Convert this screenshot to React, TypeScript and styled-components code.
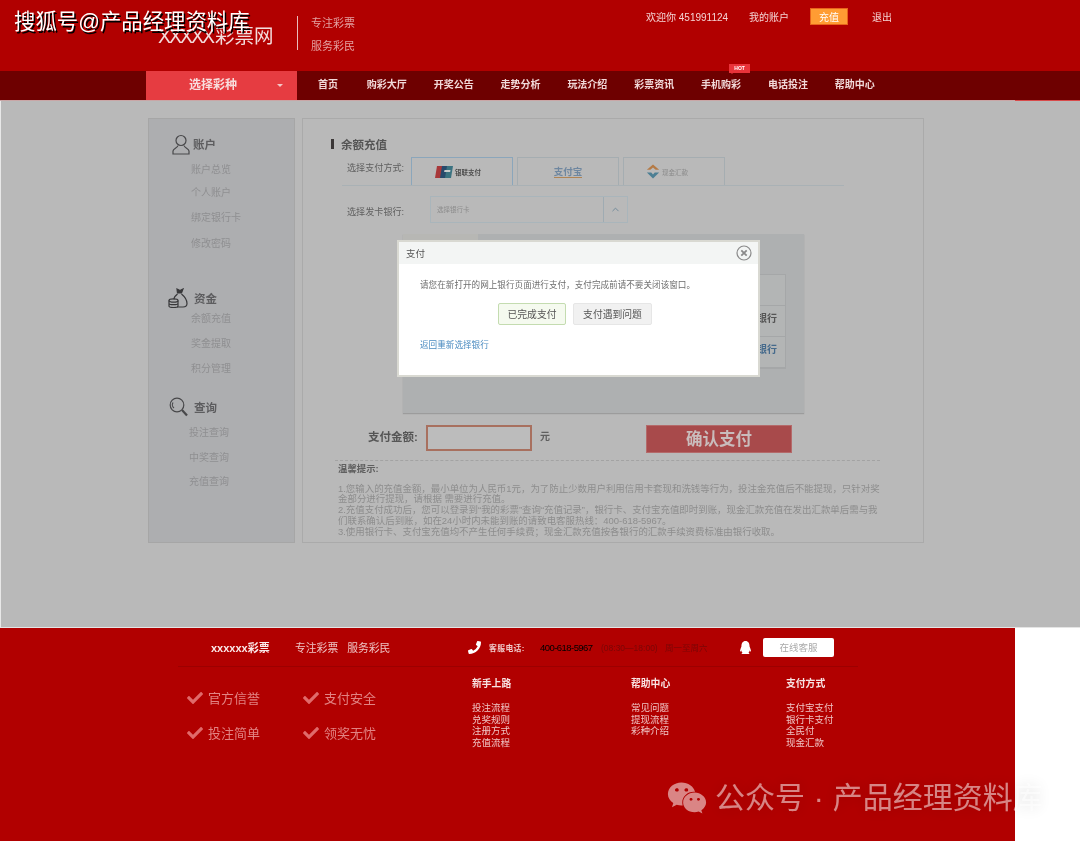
import styled, { createGlobalStyle } from 'styled-components';
import { FaCheck, FaPhoneAlt, FaQq, FaWeixin } from 'react-icons/fa';
import { FiChevronUp } from 'react-icons/fi';

const FONT = '"Liberation Sans", "Noto Sans CJK SC", sans-serif';

const GlobalStyle = createGlobalStyle`
  html, body {
    margin: 0;
    padding: 0;
    background: #fff;
  }
  * {
    box-sizing: border-box;
  }
`;

const Page = styled.div`
  position: relative;
  width: 1080px;
  height: 841px;
  overflow: hidden;
  font-family: ${FONT};
  background: #fff;
  filter: blur(0.35px);
`;

const Watermark = styled.div`
  position: absolute;
  left: 14px;
  top: 9px;
  font-size: 21.4px;
  line-height: 26px;
  color: #fff;
  text-shadow: 1.5px 1.5px 0 #000;
  z-index: 5;
`;

const BottomMark = styled.div`
  position: absolute;
  left: 667px;
  top: 778px;
  display: flex;
  align-items: center;
  gap: 8px;
  font-size: 30px;
  line-height: 38px;
  word-spacing: 0.5px;
  color: rgba(255, 255, 255, 0.52);
  text-shadow: 0 0 14px rgba(0, 0, 0, 0.12);
  white-space: nowrap;
  z-index: 5;
`;

const Header = styled.header`
  display: flex;
  height: 71px;
  padding-left: 158px;
  background: #b10000;
`;

const Logo = styled.div`
  margin-top: 23px;
  width: 139px;
  font-size: 19.5px;
  line-height: 26px;
  color: #f3dcdc;
  white-space: nowrap;
`;

const LogoMask = styled.span`
  letter-spacing: -2px;
  margin-right: 2px;
`;

const Slogan = styled.div`
  display: flex;
  flex-direction: column;
  gap: 9px;
  height: 34px;
  margin-top: 16px;
  padding-left: 13px;
  border-left: 1.5px solid #eabcbc;
  font-size: 11px;
  line-height: 14px;
  color: #e3a0a0;
  white-space: nowrap;
`;

const UserBar = styled.div`
  display: flex;
  align-items: center;
  height: 17px;
  margin: 8px 0 0 291px;
  font-size: 10px;
  color: #f4d3d3;
  white-space: nowrap;
`;

const UserLink = styled.span<{ $gap: number }>`
  margin-right: ${(p) => p.$gap}px;
`;

const RechargeButton = styled.span`
  display: flex;
  align-items: center;
  justify-content: center;
  width: 38px;
  height: 17px;
  margin-right: 24px;
  background: #ff9c33;
  border: 1px solid #e8641c;
  color: #fff;
`;

const Nav = styled.nav`
  position: relative;
  display: flex;
  height: 30px;
  padding-left: 146px;
  background: #6e0000;
  border-bottom: 1px solid #c9a6a6;

  &::after {
    content: '';
    position: absolute;
    right: 0;
    bottom: -1px;
    width: 65px;
    height: 1px;
    background: #d84a4a;
  }
`;

const LotteryPicker = styled.div`
  position: relative;
  width: 151px;
  padding-left: 43px;
  margin-right: 21px;
  background: #e63c41;
  color: #f8dede;
  font-size: 12px;
  font-weight: bold;
  line-height: 28px;

  &::after {
    content: '';
    position: absolute;
    left: 131px;
    top: 13px;
    border: 3px solid transparent;
    border-top-color: #f4c6c6;
  }
`;

const NavItems = styled.div`
  display: flex;
  gap: 26.85px;
`;

const NavItem = styled.span`
  position: relative;
  font-size: 10px;
  font-weight: bold;
  line-height: 28px;
  color: #f1d9d9;
  white-space: nowrap;

  &:first-child {
    margin-right: 2px;
  }
`;

const HotBadge = styled.span`
  position: absolute;
  left: 28px;
  top: -7px;
  width: 21px;
  height: 9px;
  background: #e9333a;
  color: #fff;
  font-size: 5px;
  font-weight: bold;
  line-height: 9px;
  text-align: center;

  &::after {
    content: '';
    position: absolute;
    left: 2px;
    top: 9px;
    border: 1.5px solid transparent;
    border-top-color: #e9333a;
  }
`;

const Main = styled.main`
  position: relative;
  display: flex;
  gap: 7px;
  height: 527px;
  padding: 17px 0 0 147px;
  background: #b9b9b9;
  border-left: 1px solid #e8e8e8;
  border-bottom: 1px solid #e4e4e4;
`;

const Sidebar = styled.aside`
  width: 147px;
  height: 425px;
  padding-top: 13px;
  background: #adaeb0;
  border: 1px solid #a6a6a6;
`;

const SideSection = styled.section<{ $mb: number; $indent: number }>`
  padding-left: ${(p) => p.$indent}px;
  margin-bottom: ${(p) => p.$mb}px;
`;

const SideHead = styled.div<{ $gap: number; $left: number; $mb: number }>`
  display: flex;
  align-items: center;
  gap: ${(p) => p.$gap}px;
  height: 24px;
  margin-left: ${(p) => p.$left}px;
  margin-bottom: ${(p) => p.$mb}px;
  color: #5d5d5f;
  font-size: 11.5px;
  font-weight: bold;

  svg {
    flex: none;
  }
`;

const SideItem = styled.div<{ $h: number }>`
  height: ${(p) => p.$h}px;
  font-size: 10px;
  line-height: 18px;
  color: #8f8f91;
  white-space: nowrap;
`;

const Panel = styled.div`
  width: 622px;
  height: 425px;
  padding: 17px 0 0 28px;
  border: 1px solid #aaaaaa;
`;

const PanelTitle = styled.h2`
  display: flex;
  align-items: center;
  gap: 7px;
  height: 16px;
  margin: 0;
  font-size: 11.5px;
  font-weight: bold;
  color: #555;

  &::before {
    content: '';
    width: 3px;
    height: 10px;
    background: #3c3838;
  }
`;

const TabRow = styled.div`
  display: flex;
  align-items: flex-end;
  width: 502px;
  height: 29px;
  margin: 5px 0 0 11px;
  border-bottom: 1px solid #a9b1b5;
`;

const RowLabel = styled.span<{ $w: number; $top: number }>`
  align-self: flex-start;
  width: ${(p) => p.$w}px;
  padding: ${(p) => p.$top}px 0 0 5px;
  font-size: 9.1px;
  line-height: 12px;
  color: #5f5f5f;
  white-space: nowrap;
`;

const PayTab = styled.div<{ $active?: boolean; $pr: number }>`
  display: flex;
  align-items: center;
  justify-content: center;
  gap: 2px;
  width: 102px;
  height: 28px;
  margin-right: 4px;
  padding-right: ${(p) => p.$pr}px;
  border: 1px solid ${(p) => (p.$active ? '#8ba6bb' : '#a5adb1')};
  border-bottom: none;
  font-size: 6.5px;
  font-weight: ${(p) => (p.$active ? 'bold' : 'normal')};
  color: ${(p) => (p.$active ? '#4d4d4d' : '#8b8b8b')};
`;

const AlipayText = styled.span`
  font-size: 9.5px;
  font-weight: bold;
  color: #6f87a0;
  border-bottom: 1px solid #b08455;
  line-height: 11px;
`;

const BankRow = styled.div`
  display: flex;
  height: 27px;
  margin: 10px 0 0 11px;
`;

const BankSelect = styled.div`
  display: flex;
  width: 198px;
  height: 27px;
  border: 1px solid #a9b5bb;
`;

const BankPlaceholder = styled.span`
  flex: 1;
  padding-left: 6px;
  font-size: 6.5px;
  line-height: 25px;
  color: #8c8c8c;
  border-right: 1px solid #9fabb2;
`;

const BankArrow = styled.span`
  display: flex;
  align-items: center;
  justify-content: center;
  width: 23px;
  color: #6d8898;
`;

const BankBox = styled.div`
  position: relative;
  width: 401px;
  height: 179px;
  margin: 11px 0 0 72px;
  background: #aeb0b1;
  box-shadow: 0 1px 1px #9c9c9c;

  &::before {
    content: '';
    position: absolute;
    left: 0;
    top: 0;
    width: 75px;
    height: 7px;
    background: #b7b7b4;
  }
`;

const BankGrid = styled.div`
  position: absolute;
  top: 40px;
  right: 18px;
  width: 120px;
  border: 1px solid #a5a7a8;
  background: #b3b5b5;
`;

const BankCell = styled.div<{ $color: string }>`
  height: 31px;
  padding-right: 8px;
  border-bottom: 1px solid #a5a7a8;
  font-size: 10px;
  font-weight: bold;
  line-height: 25px;
  text-align: right;
  color: ${(p) => p.$color};
`;

const AmountRow = styled.div`
  display: flex;
  align-items: flex-start;
  height: 28px;
  margin: 12px 0 0 37px;
`;

const AmountLabel = styled.span`
  width: 58px;
  font-size: 11.5px;
  font-weight: bold;
  line-height: 24px;
  color: #565656;
`;

const AmountInput = styled.div`
  width: 106px;
  height: 26px;
  border: 2px solid #a8705f;
  background: #bcbcbc;
`;

const Unit = styled.span`
  width: 114px;
  padding-left: 8px;
  font-size: 10px;
  font-weight: bold;
  line-height: 24px;
  color: #5f5f5f;
`;

const ConfirmButton = styled.div`
  width: 146px;
  height: 28px;
  background: #a84a4b;
  border: 1px solid #b46a6a;
  color: #c9bcbc;
  font-size: 16.5px;
  font-weight: bold;
  line-height: 26px;
  text-align: center;
`;

const Tips = styled.div`
  width: 545px;
  margin: 7px 0 0 4px;
  border-top: 1px dashed #a3a3a3;
`;

const TipsTitle = styled.div`
  padding: 1px 0 0 3px;
  font-size: 9.4px;
  font-weight: bold;
  line-height: 13px;
  color: #606060;
`;

const TipsBody = styled.div`
  margin: 8.5px -3px 0 3px;
  font-size: 9.45px;
  line-height: 10.8px;
  color: #8d8d8d;
`;

const Modal = styled.div`
  position: absolute;
  left: 396px;
  top: 139px;
  width: 363px;
  height: 137px;
  background: #fff;
  border: 2px solid #d9d9d2;
`;

const ModalHead = styled.div`
  display: flex;
  align-items: center;
  justify-content: space-between;
  height: 22px;
  padding: 0 6px 0 7px;
  background: #f3f5f4;
  color: #555;
  font-size: 9.5px;
`;

const CloseIcon = styled.svg`
  width: 16px;
  height: 16px;
  margin-top: -1px;
`;

const ModalMessage = styled.div`
  padding: 15px 0 0 21px;
  font-size: 8.6px;
  line-height: 12px;
  color: #6d6d6d;
`;

const ModalButtons = styled.div`
  display: flex;
  gap: 7px;
  margin: 12px 0 0 99px;
`;

const ModalButton = styled.div<{ $done?: boolean }>`
  display: flex;
  align-items: center;
  justify-content: center;
  height: 22px;
  width: ${(p) => (p.$done ? 68 : 79)}px;
  border: 1px solid ${(p) => (p.$done ? '#c4dcb0' : '#e6e6e6')};
  border-radius: 2px;
  background: ${(p) => (p.$done ? '#f5faef' : '#f1f1f1')};
  color: #555;
  font-size: 9.8px;
`;

const BackLink = styled.div`
  padding: 14px 0 0 21px;
  font-size: 8.6px;
  line-height: 12px;
  color: #4a8bc0;
`;

const Footer = styled.footer`
  width: 1015px;
  height: 214px;
  background: #b10000;
`;

const FooterTop = styled.div`
  display: flex;
  align-items: center;
  width: 680px;
  height: 39px;
  margin-left: 178px;
  padding: 0 0 0 33px;
  border-bottom: 1px solid #9c0000;
  white-space: nowrap;
`;

const FooterBrand = styled.span`
  width: 84px;
  font-size: 11px;
  font-weight: bold;
  color: #fbeaea;
`;

const FooterSlogan = styled.span`
  width: 173px;
  font-size: 10.8px;
  color: #eec3c3;
  word-spacing: 6px;
`;

const PhoneLabel = styled.span`
  width: 51px;
  margin-left: 8px;
  font-size: 7.8px;
  font-weight: bold;
  letter-spacing: 0.4px;
  color: #f0caca;
`;

const PhoneNumber = styled.span`
  width: 61px;
  font-size: 9.5px;
  letter-spacing: -0.55px;
  color: #000;
`;

const PhoneHours = styled.span`
  width: 138px;
  font-size: 8.5px;
  word-spacing: 5px;
  color: #7a0606;
`;

const ServiceButton = styled.span`
  width: 71px;
  height: 19px;
  margin-left: 11px;
  border-radius: 2px;
  background: #fff;
  color: #aaa;
  font-size: 9.5px;
  line-height: 19px;
  text-align: center;
`;

const FooterBody = styled.div`
  display: flex;
  margin-left: 187px;
`;

const Promises = styled.div`
  display: grid;
  grid-template-columns: 116px 116px;
  grid-auto-rows: 35px;
  width: 285px;
  padding-top: 13px;
`;

const Promise = styled.div`
  display: flex;
  align-items: center;
  gap: 5px;
  font-size: 13px;
  color: #e28383;
  white-space: nowrap;
`;

const LinkColumn = styled.div<{ $w: number }>`
  width: ${(p) => p.$w}px;
  padding-top: 10px;
`;

const LinkTitle = styled.div`
  margin-bottom: 12px;
  font-size: 9.8px;
  font-weight: bold;
  line-height: 13px;
  color: #f8e3e3;
`;

const LinkItem = styled.div`
  font-size: 9.5px;
  line-height: 11.6px;
  color: #efc4c4;
`;

const menu = [
  '首页',
  '购彩大厅',
  '开奖公告',
  '走势分析',
  '玩法介绍',
  '彩票资讯',
  '手机购彩',
  '电话投注',
  '帮助中心',
];

const columns = [
  { title: '新手上路', w: 159, items: ['投注流程', '兑奖规则', '注册方式', '充值流程'] },
  { title: '帮助中心', w: 155, items: ['常见问题', '提现流程', '彩种介绍'] },
  { title: '支付方式', w: 80, items: ['支付宝支付', '银行卡支付', '全民付', '现金汇款'] },
];

// full-width punctuation, written as escapes so it stays full-width
const tips = [
  '1.您输入的充值金额\uFF0C最小单位为人民币1元\uFF0C为了防止少数用户利用信用卡套现和洗钱等行为\uFF0C投注金充值后不能提现\uFF0C只针对奖金部分进行提现\uFF0C请根据 需要进行充值。',
  '2.充值支付成功后\uFF0C您可以登录到“我的彩票”查询“充值记录”\uFF0C银行卡、支付宝充值即时到账\uFF0C现金汇款充值在发出汇款单后需与我们联系确认后到账\uFF0C如在24小时内未能到账的请致电客服热线\uFF1A400-618-5967。',
  '3.使用银行卡、支付宝充值均不产生任何手续费\uFF1B现金汇款充值按各银行的汇款手续资费标准由银行收取。',
];

const modalMessage = '请您在新打开的网上银行页面进行支付\uFF0C支付完成前请不要关闭该窗口。';

function UserIcon() {
  return (
    <svg width="18" height="21" viewBox="0 0 18 21" fill="none" stroke="#48484a" strokeWidth="1.2">
      <circle cx="9" cy="6.5" r="5" />
      <path d="M6 11.5C5.5 14 1 14.5 1 17v3h16v-3c0-2.5-4.5-3-5-5.5" />
    </svg>
  );
}

function BagIcon() {
  return (
    <svg width="20" height="20" viewBox="0 0 20 20" fill="none" stroke="#38383a" strokeWidth="1.2">
      <path d="M9 1l3 1.5L15 1l-1.5 4h-4z" fill="#38383a" />
      <path d="M9.5 6C7 8 6 10 6 11h-.5M13.5 6c3 2.5 5.5 6 5.5 9.5 0 2.5-2 3.5-4 3.5H9" />
      <ellipse cx="5.5" cy="12.5" rx="4.5" ry="1.7" />
      <path d="M1 12.5V18c0 1 2 1.5 4.5 1.5S10 19 10 18v-5.5M1 15.2c0 1 2 1.5 4.5 1.5s4.5-.5 4.5-1.5" />
    </svg>
  );
}

function SearchIcon() {
  return (
    <svg width="20" height="20" viewBox="0 0 20 20" fill="none" stroke="#48484a" strokeWidth="1.2">
      <circle cx="8" cy="8" r="6.8" />
      <path d="M4 5.5C2.8 7.5 3.5 10 5 11" />
      <path d="M13 13l5 5.5" strokeWidth="2.2" />
    </svg>
  );
}

function UnionPayIcon() {
  return (
    <svg width="18" height="12" viewBox="0 0 18 12">
      <path d="M2 0h7L7 12H0z" fill="#a8383a" />
      <path d="M7 0h6l-2 12H5z" fill="#27496b" />
      <path d="M12 0h6l-2 12h-6z" fill="#3a7280" />
      <path d="M9.5 4h6l-.4 2h-6z" fill="#c8cccc" />
    </svg>
  );
}

function CashIcon() {
  return (
    <svg width="14" height="15" viewBox="0 0 16 16">
      <path d="M8 0l7 6H11L8 3.5 5 6H1z" fill="#b57a45" />
      <path d="M1 9h5l2 2.5L10 9h5l-7 7z" fill="#4c7f94" />
    </svg>
  );
}

function App() {
  return (
    <Page>
      <GlobalStyle />
      <Watermark>搜狐号@产品经理资料库</Watermark>

      <Header>
        <Logo>
          <LogoMask>XXXXX</LogoMask>彩票网
        </Logo>
        <Slogan>
          <span>专注彩票</span>
          <span>服务彩民</span>
        </Slogan>
        <UserBar>
          <UserLink $gap={21}>欢迎你 451991124</UserLink>
          <UserLink $gap={21}>我的账户</UserLink>
          <RechargeButton>充值</RechargeButton>
          <span>退出</span>
        </UserBar>
      </Header>

      <Nav>
        <LotteryPicker>选择彩种</LotteryPicker>
        <NavItems>
          {menu.map((item) => (
            <NavItem key={item}>
              {item}
              {item === '手机购彩' && <HotBadge>HOT</HotBadge>}
            </NavItem>
          ))}
        </NavItems>
      </Nav>

      <Main>
        <Sidebar>
          <SideSection $mb={26} $indent={42}>
            <SideHead $gap={3} $left={-19} $mb={5}>
              <UserIcon />
              账户
            </SideHead>
            <SideItem $h={23}>账户总览</SideItem>
            <SideItem $h={25}>个人账户</SideItem>
            <SideItem $h={26}>绑定银行卡</SideItem>
            <SideItem $h={25}>修改密码</SideItem>
          </SideSection>
          <SideSection $mb={10} $indent={42}>
            <SideHead $gap={6} $left={-23} $mb={0}>
              <BagIcon />
              资金
            </SideHead>
            <SideItem $h={25}>余额充值</SideItem>
            <SideItem $h={25}>奖金提取</SideItem>
            <SideItem $h={25}>积分管理</SideItem>
          </SideSection>
          <SideSection $mb={0} $indent={40}>
            <SideHead $gap={5} $left={-20} $mb={5}>
              <SearchIcon />
              查询
            </SideHead>
            <SideItem $h={25}>投注查询</SideItem>
            <SideItem $h={24}>中奖查询</SideItem>
            <SideItem $h={24}>充值查询</SideItem>
          </SideSection>
        </Sidebar>

        <Panel>
          <PanelTitle>余额充值</PanelTitle>
          <TabRow>
            <RowLabel $w={69} $top={5}>
              选择支付方式:
            </RowLabel>
            <PayTab $active $pr={8}>
              <UnionPayIcon />
              银联支付
            </PayTab>
            <PayTab $pr={0}>
              <AlipayText>支付宝</AlipayText>
            </PayTab>
            <PayTab $pr={14}>
              <CashIcon />
              现金汇款
            </PayTab>
          </TabRow>
          <BankRow>
            <RowLabel $w={88} $top={10}>
              选择发卡银行:
            </RowLabel>
            <BankSelect>
              <BankPlaceholder>选择银行卡</BankPlaceholder>
              <BankArrow>
                <FiChevronUp size={11} />
              </BankArrow>
            </BankSelect>
          </BankRow>
          <BankBox>
            <BankGrid>
              <BankCell $color="#555"> </BankCell>
              <BankCell $color="#555">银行</BankCell>
              <BankCell $color="#456a8c">银行</BankCell>
            </BankGrid>
          </BankBox>
          <AmountRow>
            <AmountLabel>支付金额:</AmountLabel>
            <AmountInput />
            <Unit>元</Unit>
            <ConfirmButton>确认支付</ConfirmButton>
          </AmountRow>
          <Tips>
            <TipsTitle>温馨提示:</TipsTitle>
            <TipsBody>
              {tips.map((line) => (
                <div key={line}>{line}</div>
              ))}
            </TipsBody>
          </Tips>
        </Panel>

        <Modal>
          <ModalHead>
            支付
            <CloseIcon viewBox="0 0 16 16" fill="none" stroke="#8a8a8a">
              <circle cx="8" cy="8" r="7" strokeWidth="1.2" />
              <path d="M5.3 5.3l5.4 5.4M10.7 5.3l-5.4 5.4" strokeWidth="1.8" />
            </CloseIcon>
          </ModalHead>
          <ModalMessage>{modalMessage}</ModalMessage>
          <ModalButtons>
            <ModalButton $done>已完成支付</ModalButton>
            <ModalButton>支付遇到问题</ModalButton>
          </ModalButtons>
          <BackLink>返回重新选择银行</BackLink>
        </Modal>
      </Main>

      <Footer>
        <FooterTop>
          <FooterBrand>xxxxxx彩票</FooterBrand>
          <FooterSlogan>专注彩票 服务彩民</FooterSlogan>
          <FaPhoneAlt size={13} color="#fff" style={{ transform: 'scaleX(-1)' }} />
          <PhoneLabel>客服电话:</PhoneLabel>
          <PhoneNumber>400-618-5967</PhoneNumber>
          <PhoneHours>(08:30—18:00) 周一至周六</PhoneHours>
          <FaQq size={13} color="#fff" />
          <ServiceButton>在线客服</ServiceButton>
        </FooterTop>
        <FooterBody>
          <Promises>
            {['官方信誉', '支付安全', '投注简单', '领奖无忧'].map((text) => (
              <Promise key={text}>
                <FaCheck size={16} color="#e06a6a" />
                {text}
              </Promise>
            ))}
          </Promises>
          {columns.map((col) => (
            <LinkColumn key={col.title} $w={col.w}>
              <LinkTitle>{col.title}</LinkTitle>
              {col.items.map((item) => (
                <LinkItem key={item}>{item}</LinkItem>
              ))}
            </LinkColumn>
          ))}
        </FooterBody>
      </Footer>

      <BottomMark>
        <FaWeixin size={40} />
        公众号 · 产品经理资料库
      </BottomMark>
    </Page>
  );
}

export default App;
